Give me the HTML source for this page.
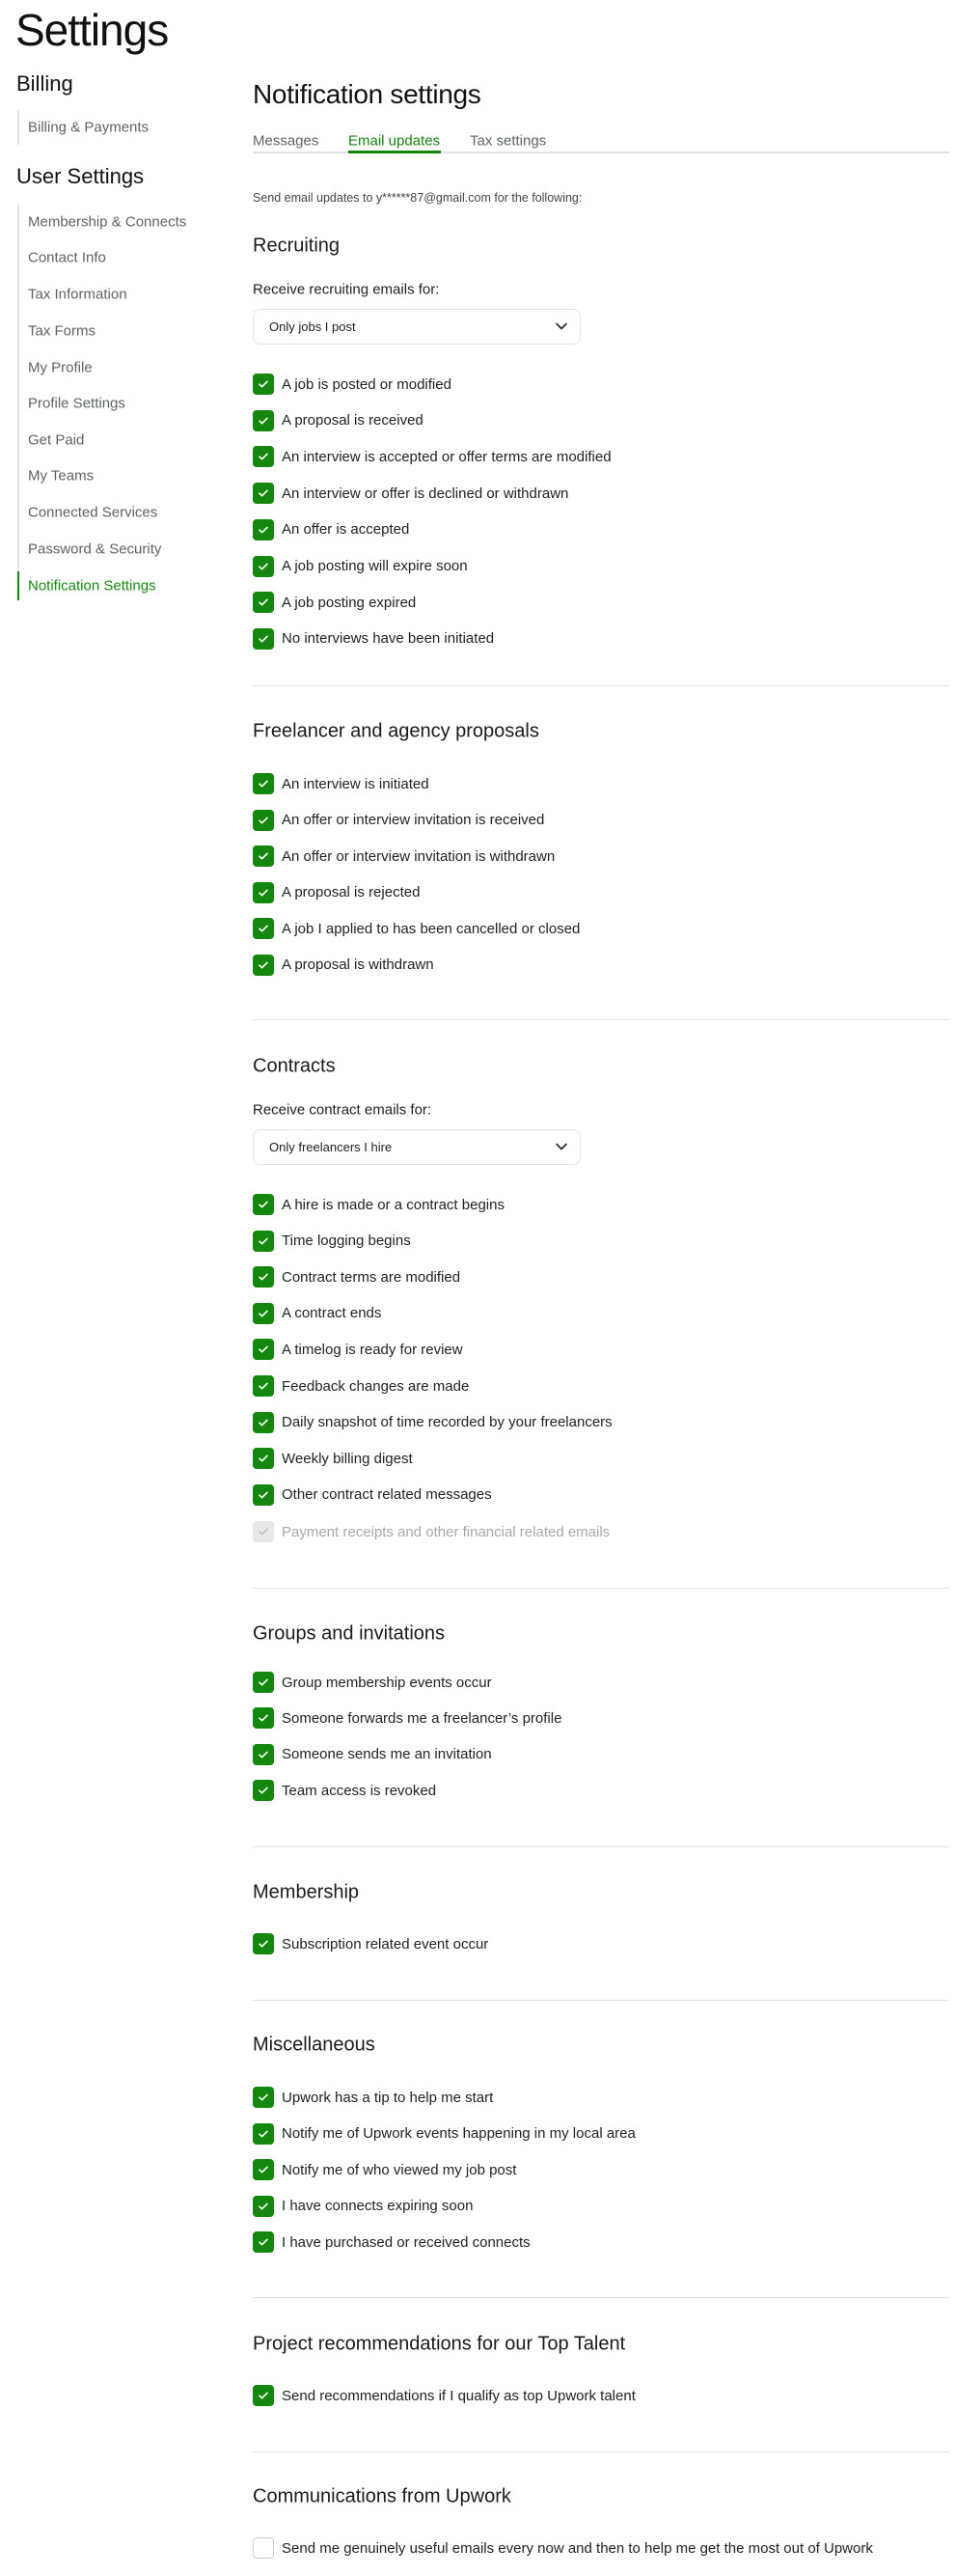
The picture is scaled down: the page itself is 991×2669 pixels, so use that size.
<!DOCTYPE html>
<html><head><meta charset="utf-8">
<style>
*{margin:0;padding:0;box-sizing:border-box}
body{width:991px;height:2669px;background:#fff;font-family:"Liberation Sans",Arial,sans-serif;color:#181818;position:relative;overflow:hidden}
.a{position:absolute;white-space:nowrap}
.t{transform:translateY(-50%)}
.side{position:absolute;left:29px;font-size:15px;color:#5e6560;transform:translateY(-50%)}
.h{position:absolute;left:262px;font-size:20px;color:#1a1a1a;transform:translateY(-50%)}
.div{position:absolute;left:262px;width:722px;height:1px;background:#e1e1e1}
.it{position:absolute;left:262px;height:22px;display:flex;align-items:center;font-size:15px;color:#222;transform:translateY(-50%)}
.cb{width:22px;height:22px;border-radius:4px;background:#14880e;margin-right:8px;display:flex;align-items:center;justify-content:center;flex:none}
.cb.dis{background:#e8e8e8}
.cb.off{background:#fff;border:1.5px solid #cfcfcf}
.it.dis{color:#a8a8a8}
.sel{position:absolute;left:262px;width:340px;height:37px;border:1px solid #e3e3e3;border-radius:8px;font-size:13px;color:#222;padding-left:16px;display:flex;align-items:center}
.sel svg{position:absolute;right:12px;top:12px}
</style></head><body>
<div class="a" style="left:16px;top:4px;font-size:46px;color:#111;letter-spacing:-1px">Settings</div>
<div class="a" style="left:17px;top:74px;font-size:22px;color:#111">Billing</div>
<div class="a" style="left:18px;top:114px;width:2px;height:36px;background:#e4e4e4"></div>
<div class="side" style="top:132px">Billing &amp; Payments</div>
<div class="a" style="left:17px;top:170px;font-size:22px;color:#111">User Settings</div>
<div class="a" style="left:18px;top:212px;width:2px;height:410px;background:#e4e4e4"></div>
<div class="a" style="left:18px;top:592px;width:2px;height:30px;background:#14880e"></div>
<div class="side" style="top:230px">Membership &amp; Connects</div>
<div class="side" style="top:267px">Contact Info</div>
<div class="side" style="top:305px">Tax Information</div>
<div class="side" style="top:343px">Tax Forms</div>
<div class="side" style="top:381px">My Profile</div>
<div class="side" style="top:418px">Profile Settings</div>
<div class="side" style="top:456px">Get Paid</div>
<div class="side" style="top:493px">My Teams</div>
<div class="side" style="top:531px">Connected Services</div>
<div class="side" style="top:569px">Password &amp; Security</div>
<div class="side" style="top:607px;color:#14880e">Notification Settings</div>

<div class="a t" style="left:262px;top:98px;font-size:28px;color:#111;letter-spacing:-0.3px">Notification settings</div>
<div class="a t" style="left:262px;top:146px;font-size:15px;color:#5e6560">Messages</div>
<div class="a t" style="left:361px;top:146px;font-size:15px;color:#14880e">Email updates</div>
<div class="a t" style="left:487px;top:146px;font-size:15px;color:#5e6560">Tax settings</div>
<div class="a" style="left:262px;top:157px;width:722px;height:2px;background:#e1e1e1"></div>
<div class="a" style="left:361px;top:156px;width:96px;height:3px;background:#14880e"></div>
<div class="a t" style="left:262px;top:205px;font-size:12.5px;color:#444">Send email updates to y******87@gmail.com for the following:</div>

<div id="c"></div>
<script>
const chk='<svg width="12" height="10" viewBox="0 0 12 10"><path d="M2 5.2l2.6 2.5L10 2.3" fill="none" stroke="#fff" stroke-width="1.6" stroke-linecap="round" stroke-linejoin="round"/></svg>';
const chkd='<svg width="12" height="10" viewBox="0 0 12 10"><path d="M2 5.2l2.6 2.5L10 2.3" fill="none" stroke="#bdbdbd" stroke-width="1.6" stroke-linecap="round" stroke-linejoin="round"/></svg>';
let h='';
function H(t,y){h+=`<div class="h" style="top:${y}px">${t}</div>`}
function D(y){h+=`<div class="div" style="top:${y}px"></div>`}
function L(t,y){h+=`<div class="a t" style="left:262px;top:${y}px;font-size:15px;color:#222">${t}</div>`}
function S(t,y){h+=`<div class="sel" style="top:${y}px">${t}<svg width="14" height="10" viewBox="0 0 14 10"><path d="M2 2.5l5 5 5-5" fill="none" stroke="#222" stroke-width="1.6" stroke-linecap="round" stroke-linejoin="round"/></svg></div>`}
function I(arr,y0,st,cls){arr.forEach((t,i)=>{let c=cls||'';let ic=c=='dis'?chkd:(c=='off'?'':chk);h+=`<div class="it ${c}" style="top:${(y0+i*st).toFixed(1)}px"><span class="cb ${c}">${ic}</span>${t}</div>`})}
H('Recruiting',255);L('Receive recruiting emails for:',300);S('Only jobs I post',320);
I(['A job is posted or modified','A proposal is received','An interview is accepted or offer terms are modified','An interview or offer is declined or withdrawn','An offer is accepted','A job posting will expire soon','A job posting expired','No interviews have been initiated'],398,37.7);
D(710);H('Freelancer and agency proposals',758);
I(['An interview is initiated','An offer or interview invitation is received','An offer or interview invitation is withdrawn','A proposal is rejected','A job I applied to has been cancelled or closed','A proposal is withdrawn'],812,37.5);
D(1056);H('Contracts',1105);L('Receive contract emails for:',1150);S('Only freelancers I hire',1170);
I(['A hire is made or a contract begins','Time logging begins','Contract terms are modified','A contract ends','A timelog is ready for review','Feedback changes are made','Daily snapshot of time recorded by your freelancers','Weekly billing digest','Other contract related messages'],1248,37.6);
I(['Payment receipts and other financial related emails'],1587,0,'dis');
D(1645);H('Groups and invitations',1693);
I(['Group membership events occur','Someone forwards me a freelancer\u2019s profile','Someone sends me an invitation','Team access is revoked'],1743,37.4);
D(1913);H('Membership',1961);I(['Subscription related event occur'],2014,0);
D(2072);H('Miscellaneous',2119);
I(['Upwork has a tip to help me start','Notify me of Upwork events happening in my local area','Notify me of who viewed my job post','I have connects expiring soon','I have purchased or received connects'],2173,37.5);
D(2380);H('Project recommendations for our Top Talent',2429);I(['Send recommendations if I qualify as top Upwork talent'],2482,0);
D(2540);H('Communications from Upwork',2587);I(['Send me genuinely useful emails every now and then to help me get the most out of Upwork'],2640,0,'off');
document.getElementById('c').innerHTML=h;
</script>
</body></html>
